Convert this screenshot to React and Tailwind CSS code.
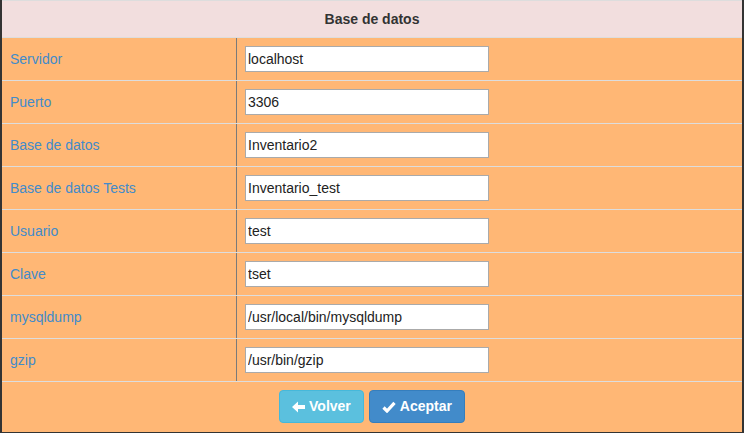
import React from "react";

const rows = [
  { label: "Servidor", value: "localhost" },
  { label: "Puerto", value: "3306" },
  { label: "Base de datos", value: "Inventario2" },
  { label: "Base de datos Tests", value: "Inventario_test" },
  { label: "Usuario", value: "test" },
  { label: "Clave", value: "tset" },
  { label: "mysqldump", value: "/usr/local/bin/mysqldump" },
  { label: "gzip", value: "/usr/bin/gzip" },
];

const ArrowLeft = () => (
  <svg width="13" height="12" viewBox="0 0 13 12" className="fill-white">
    <path d="M0 6 L6 0.5 L6 4 L13 4 L13 8 L6 8 L6 11.5 Z" />
  </svg>
);

const Check = () => (
  <svg width="14" height="12" viewBox="0 0 14 12" fill="none">
    <path d="M1.5 6.5 L5 10 L12.5 1.8" stroke="white" strokeWidth="3.2" strokeLinejoin="miter" />
  </svg>
);

export default function App() {
  return (
    <div
      className="w-[744px] h-[433px] bg-[#ffb775] border-l-2 border-r-2 border-b border-[#333] border-t-0 overflow-hidden"
      style={{ fontFamily: '"Liberation Sans", Arial, sans-serif' }}
    >
      <div className="h-[37px] bg-[#f2dede] border-t border-[#ddd] flex items-center justify-center text-[14px] font-bold text-[#333]">
        Base de datos
      </div>
      {rows.map((r, i) => (
        <div key={i} className="flex h-[43px] border-t border-[#ddd]">
          <div className="w-[235px] border-r border-[#7a7a7a] px-2 flex items-center text-[14px] text-[#428bca]">
            {r.label}
          </div>
          <div className="flex-1 px-2 flex items-center">
            <input
              type="text"
              defaultValue={r.value}
              className="w-[244px] h-[26px] bg-white border border-[#aaa] px-[2px] text-[14px] text-[#222] outline-none"
              style={{ fontFamily: '"Liberation Sans", Arial, sans-serif' }}
            />
          </div>
        </div>
      ))}
      <div className="h-[51px] border-t border-[#ddd] flex items-center justify-center gap-[5px] pb-[1px]">
        <button className="h-[33px] px-3 flex items-center gap-[4px] rounded bg-[#5bc0de] border border-[#46b8da] text-white text-[14px] font-bold">
          <ArrowLeft />
          Volver
        </button>
        <button className="h-[33px] px-3 flex items-center gap-[4px] rounded bg-[#428bca] border border-[#357ebd] text-white text-[14px] font-bold">
          <Check />
          Aceptar
        </button>
      </div>
    </div>
  );
}
